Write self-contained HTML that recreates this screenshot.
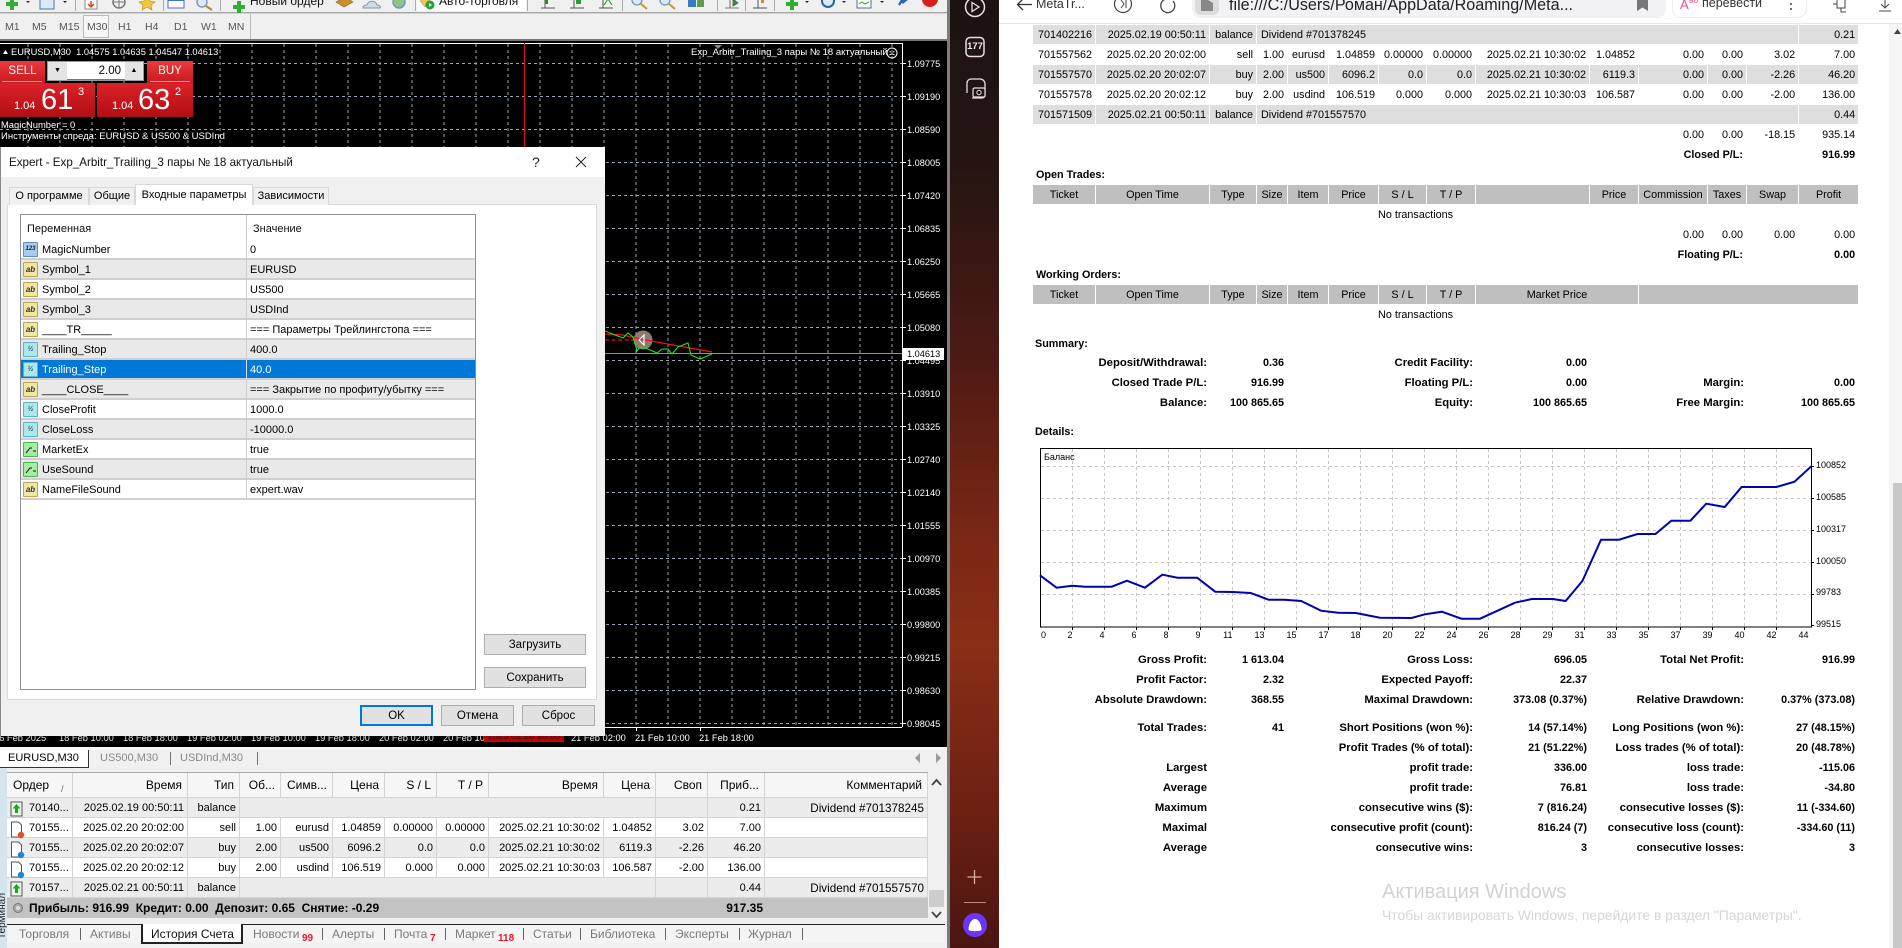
<!DOCTYPE html>
<html lang="ru"><head><meta charset="utf-8"><title>MetaTrader</title>
<style>
*{box-sizing:border-box}
html,body{margin:0;padding:0;width:1902px;height:948px;overflow:hidden;background:#fff;font-family:"Liberation Sans","Noto Sans CJK SC",sans-serif;color:#000}
.a{position:absolute;white-space:nowrap}
#wrap{position:relative;width:1902px;height:948px;overflow:hidden}
table{position:absolute;border-collapse:separate;border-spacing:0;table-layout:fixed;font-size:10.8px}
td{padding:0 3px 0 0;white-space:nowrap;overflow:hidden;text-align:right}
/* report */
.t td{height:20px;padding-top:2px;line-height:17px;border-right:1px solid #fff;border-bottom:1px solid #fff}
.t tr.g td{background:#dedede}
.t tr.h td{background:#bfbfbf;text-align:center;padding:2px 0 0}
.t b{font-weight:700}
.s td{height:20px;line-height:20px;font-weight:700}
.s td:nth-child(odd){font-size:11.3px}
/* chart labels */
.pl{position:absolute;left:907px;font-size:9.2px;color:#fff;line-height:10px}
.tl{position:absolute;top:732px;font-size:9.3px;color:#fff;line-height:12px;white-space:nowrap}
/* dialog table */
.dr{position:absolute;left:21px;width:454px;height:20px;border-bottom:2px solid #cfcfcf;font-size:11px;line-height:21px}
.dr.g{background:#e9e9e9}
.dr.sel{background:#0078d7;color:#fff;border-bottom-color:#cfcfcf}
.dr .n{position:absolute;left:21px;top:0}
.dr .v{position:absolute;left:229px;top:0}
.dr .d{position:absolute;left:225px;top:0;width:1px;height:20px;background:#cfcfcf}
.ic{position:absolute;left:2px;top:2px;width:15px;height:15px;border:1px solid #b9a456;background:#f3e6a2;border-radius:1px;font-size:8px;line-height:13px;text-align:center;color:#333;font-weight:700}
.ic.n1{background:#a9cbee;border-color:#5d8fc4;color:#123;font-size:6px}
.ic.f{background:#aee6ee;border-color:#5cb4c8;color:#256;font-size:7px}
.ic.b{background:#a6eca2;border-color:#4fb155}
.btn{position:absolute;background:#e1e1e1;border:1px solid #adadad;font-size:11.5px;text-align:center;line-height:21px}
.tab{position:absolute;top:187px;height:18px;background:#f0f0f0;border:1px solid #d9d9d9;border-bottom:0;font-size:11px;line-height:17px;text-align:center}
/* terminal table */
.b td{height:20px;padding-top:2px;line-height:17px;font-size:11px;border-right:1px solid #d4d4d4;border-bottom:1px solid #d4d4d4;background:#fff}
.b td.c{font-size:11.7px}
.b tr.g td{background:#ececec}
.b tr.hh td{height:25px;line-height:24px;font-size:12px;background:#f7f7f7;padding:0 5px 0 0;border-bottom:1px solid #d4d4d4}
.bt{position:absolute;top:934px;transform:translateY(-50%);font-size:12px;color:#7a7a7a}
.sp{position:absolute;top:928px;width:1px;height:12px;background:#666}
.red{color:#e8182c;font-weight:700;font-size:10px}
.pos{position:absolute;font-size:10px}
.m{position:absolute;top:21px;font-size:10.5px;color:#555;line-height:12px}
</style></head><body><div id="wrap">

<!-- terminal bg -->
<div class="a" style="left:0;top:0;width:950px;height:948px;background:#f0f0f0"></div>

<!-- row 1 toolbar -->
<svg class="a" style="left:0;top:0" width="950" height="14" viewBox="0 0 950 14">
<rect x="0" y="12" width="950" height="1.4" fill="#a6a6a6"/>
<path d="M12 -2v12M6 4h12" stroke="#2fae2f" stroke-width="4"/><path d="M26 1l4 0-2 2z" fill="#222"/>
<rect x="40" y="-3" width="14" height="12" fill="#dfeaf6" stroke="#4a76a8"/><path d="M63 1l4 0-2 2z" fill="#222"/>
<rect x="75" y="0" width="1" height="11" fill="#aaa"/>
<rect x="85" y="-3" width="12" height="12" fill="#fff" stroke="#8a8a8a"/><path d="M91 1v5M88 4l3 3 3-3" stroke="#d2421f" fill="none" stroke-width="1.5"/>
<circle cx="119" cy="2" r="6" fill="none" stroke="#777" stroke-width="1.5"/><path d="M119 -4v12M113 2h12" stroke="#777"/>
<path d="M147 -4l3 5 5 1-4 3 1 5-5-3-5 3 1-5-4-3 5-1z" fill="#f5c53a" stroke="#b88b10" stroke-width=".6"/>
<rect x="163" y="0" width="1" height="11" fill="#aaa"/>
<rect x="168" y="-2" width="16" height="10" fill="#fff" stroke="#3c74b4"/><rect x="168" y="-2" width="16" height="3" fill="#3c74b4"/>
<circle cx="202" cy="2" r="5" fill="#dbe8f5" stroke="#7a96b6" stroke-width="1.4"/><path d="M206 6l6 4" stroke="#b98a2a" stroke-width="2.2"/>
<rect x="220" y="0" width="1" height="11" fill="#aaa"/>
<path d="M239 1v12M233 7h12" stroke="#2fae2f" stroke-width="4"/>
<path d="M336 2l9-5 8 5-9 5z" fill="#c8912e" stroke="#8a601a" stroke-width=".6"/>
<path d="M363 8c0-3 3-3 4-3 1-5 9-5 10 0 3 0 4 2 3 3z" fill="#cfdbe6" stroke="#8898a8"/>
<circle cx="399" cy="2" r="6" fill="#8fc38a" stroke="#5f9cc4" stroke-width="1.4"/>
<rect x="415" y="0" width="1" height="11" fill="#aaa"/>
<rect x="417" y="-2" width="109" height="13" fill="#fff"/>
<path d="M420 1l6-5 5 6-6 5z" fill="#e7c75a" stroke="#a98a2a" stroke-width=".5"/><circle cx="430" cy="5" r="4.5" fill="#2a9d3f"/><path d="M429 3l3 2-3 2z" fill="#fff"/>
<g fill="none" stroke="#555"><path d="M545 -2v10M541 8h14"/><path d="M574 -2v10M570 8h14"/><path d="M603 -2v10M599 8h14"/></g>
<rect x="545" y="-2" width="3" height="6" fill="#2a8c2a"/><rect x="576" y="-1" width="5" height="5" fill="#2a9d2a"/><path d="M604 5l4-6 4 6" stroke="#2a8c2a" fill="none"/>
<rect x="527" y="0" width="1" height="11" fill="#aaa"/><rect x="622" y="0" width="1" height="11" fill="#aaa"/>
<circle cx="637" cy="0" r="5" fill="#dbe8f5" stroke="#6f94bc" stroke-width="1.3"/><path d="M641 4l6 5" stroke="#c69a32" stroke-width="2"/>
<circle cx="665" cy="0" r="5" fill="#dbe8f5" stroke="#6f94bc" stroke-width="1.3"/><path d="M669 4l6 5" stroke="#c69a32" stroke-width="2"/>
<rect x="688" y="0" width="8" height="7" fill="#3a7cc4"/><rect x="697" y="0" width="7" height="7" fill="#5aa24a"/>
<rect x="717" y="0" width="1" height="11" fill="#aaa"/>
<path d="M730 -2v10M725 8h14M733 -1l5 4-5 3z" fill="#2a9d2a" stroke="#555" stroke-width=".8"/>
<rect x="745" y="0" width="1" height="11" fill="#aaa"/>
<path d="M758 -2v10M753 8h14" stroke="#555" fill="none"/><rect x="761" y="0" width="3" height="3" fill="#c84"/>
<rect x="774" y="0" width="1" height="11" fill="#aaa"/>
<path d="M792 -2v12M786 4h12" stroke="#2fae2f" stroke-width="4"/><path d="M805 1l4 0-2 2z" fill="#222"/>
<circle cx="828" cy="1" r="6" fill="#dfeaf6" stroke="#2566aa" stroke-width="2"/><path d="M842 1l4 0-2 2z" fill="#222"/>
<rect x="857" y="-2" width="14" height="10" fill="#fff" stroke="#55708c"/><path d="M859 4l3-2 3 2 4-2" stroke="#3a9a3a" fill="none"/><path d="M880 1l4 0-2 2z" fill="#222"/>
<path d="M904 -3l-5 8M903 -3l3 3-4 3" stroke="#3066b4" stroke-width="2.4" fill="none"/>
<path d="M922 2c0-4 6-4 8-3v9l-3-1-3 2z" fill="#ddd"/><circle cx="930" cy="-1" r="8" fill="#d91e1e"/>
</svg>
<div class="a" style="left:250px;top:-6px;font-size:12px;line-height:14px;color:#111">Новый ордер</div>
<div class="a" style="left:439px;top:-6px;font-size:12px;line-height:14px;color:#111">Авто-торговля</div>

<!-- row 2 timeframes -->
<div class="a" style="left:83px;top:15px;width:26px;height:23px;border:1px solid #bbb;background:#f7f7f7"></div>
<div class="m" style="left:5px">M1</div><div class="m" style="left:32px">M5</div><div class="m" style="left:59px">M15</div>
<div class="m" style="left:87px">M30</div><div class="m" style="left:118px">H1</div><div class="m" style="left:145px">H4</div>
<div class="m" style="left:174px">D1</div><div class="m" style="left:201px">W1</div><div class="m" style="left:228px">MN</div>
<div class="a" style="left:250px;top:14px;width:1px;height:25px;background:#bbb"></div>

<!-- chart -->
<div class="a" style="left:0;top:39px;width:948px;height:2px;background:#777"></div>
<div class="a" style="left:0;top:41px;width:947px;height:706px;background:#000"></div>
<svg class="a" style="left:0;top:41px" width="947" height="706" viewBox="0 41 947 706">
<path d="M0 43.5H902M902.5 43V727M0 727.5H902" stroke="#fff" fill="none"/>
<path d="M28 44V727M60 44V727M92 44V727M124 44V727M156 44V727M188 44V727M220 44V727M252 44V727M284 44V727M316 44V727M348 44V727M380 44V727M412 44V727M444 44V727M476 44V727M508 44V727M540 44V727M572 44V727M604 44V727M636 44V727M668 44V727M700 44V727M732 44V727M764 44V727M796 44V727M828 44V727M860 44V727M892 44V727" stroke="#9aa6b2" stroke-dasharray="3 3" fill="none"/>
<path d="M0 63.5H902M0 96.5H902M0 129.5H902M0 162.5H902M0 195.5H902M0 228.5H902M0 261.5H902M0 294.5H902M0 327.5H902M0 360.5H902M0 393.5H902M0 426.5H902M0 459.5H902M0 492.5H902M0 525.5H902M0 558.5H902M0 591.5H902M0 624.5H902M0 657.5H902M0 690.5H902M0 723.5H902" stroke="#9aa6b2" stroke-dasharray="3 3" fill="none"/>
<path d="M902 63.5h4M902 96.5h4M902 129.5h4M902 162.5h4M902 195.5h4M902 228.5h4M902 261.5h4M902 294.5h4M902 327.5h4M902 360.5h4M902 393.5h4M902 426.5h4M902 459.5h4M902 492.5h4M902 525.5h4M902 558.5h4M902 591.5h4M902 624.5h4M902 657.5h4M902 690.5h4M902 723.5h4M636.5 727v4M700.5 727v4" stroke="#fff"/>
<path d="M524.5 43V727" stroke="#e01010"/>
<path d="M604 353.5H902" stroke="#8a929a"/>
<path d="M714 45l4 4 4-4z" fill="#7a8a9a"/>
<path d="M3 54l2.5-4 2.5 4z" fill="#fff"/>
<circle cx="643" cy="340" r="9.5" fill="#8b7b6e"/>
<path d="M605 340H640" stroke="#f01010" stroke-width="1.3" stroke-dasharray="4 2.5"/>
<path d="M605 334L623 335L640 339L712 352" stroke="#f01010" stroke-width="1.3" fill="none"/>
<path d="M605 331L615 335L623 338L628 333L633 337L635 343L637 351L640 347L648 349L657 353L662 349L668 349L672 354L678 347L688 343L691 355L700 359L705 357L712 354" stroke="#1ee61e" stroke-width="1.1" fill="none"/>
<path d="M644 335L639 340L644 345Z" fill="none" stroke="#fff" stroke-width="1.2"/>
</svg>
<div class="a" style="left:11px;top:46px;font-size:9.3px;line-height:12px;color:#fff">EURUSD,M30&nbsp; 1.04575 1.04635 1.04547 1.04613</div>
<div class="a" style="left:691px;top:47px;font-size:9.5px;line-height:12px;color:#fff">Exp_Arbitr_Trailing_3 пары № 18 актуальный</div>
<svg class="a" style="left:886px;top:47px" width="12" height="12"><circle cx="6" cy="6" r="5" fill="none" stroke="#fff"/><circle cx="4.2" cy="4.8" r=".7" fill="#fff"/><circle cx="7.8" cy="4.8" r=".7" fill="#fff"/><path d="M3.5 8q2.5-2 5 0" stroke="#fff" fill="none"/></svg>
<div class="pl" style="top:59px">1.09775</div><div class="pl" style="top:92px">1.09190</div><div class="pl" style="top:125px">1.08590</div><div class="pl" style="top:158px">1.08005</div><div class="pl" style="top:191px">1.07420</div><div class="pl" style="top:224px">1.06835</div><div class="pl" style="top:257px">1.06250</div><div class="pl" style="top:290px">1.05665</div><div class="pl" style="top:323px">1.05080</div><div class="pl" style="top:356px">1.04495</div><div class="pl" style="top:389px">1.03910</div><div class="pl" style="top:422px">1.03325</div><div class="pl" style="top:455px">1.02740</div><div class="pl" style="top:488px">1.02140</div><div class="pl" style="top:521px">1.01555</div><div class="pl" style="top:554px">1.00970</div><div class="pl" style="top:587px">1.00385</div><div class="pl" style="top:620px">0.99800</div><div class="pl" style="top:653px">0.99215</div><div class="pl" style="top:686px">0.98630</div><div class="pl" style="top:719px">0.98045</div>
<div class="a" style="left:903px;top:348px;width:41px;height:12px;background:#fff;color:#000;font-size:9.2px;line-height:12px;padding-left:4px">1.04613</div>
<div class="tl" style="left:-6px">16 Feb 2025</div><div class="tl" style="left:59px">18 Feb 10:00</div><div class="tl" style="left:123px">18 Feb 18:00</div><div class="tl" style="left:187px">19 Feb 02:00</div><div class="tl" style="left:251px">19 Feb 10:00</div><div class="tl" style="left:315px">19 Feb 18:00</div><div class="tl" style="left:379px">20 Feb 02:00</div><div class="tl" style="left:443px">20 Feb 10:00</div>
<div class="a" style="left:484px;top:730px;width:80px;height:12px;background:#d40000;color:#222;font-size:9.3px;line-height:12px;text-align:center">2025.02.20 20:00</div>
<div class="tl" style="left:571px">21 Feb 02:00</div><div class="tl" style="left:635px">21 Feb 10:00</div><div class="tl" style="left:699px">21 Feb 18:00</div>

<!-- one click panel -->
<div class="a" style="left:0;top:61px;width:45px;height:22px;background:linear-gradient(#ec3a3e,#c8191e);color:#fff;font-size:11.5px;line-height:20px;text-align:center">SELL</div>
<div class="a" style="left:147px;top:61px;width:46px;height:22px;background:linear-gradient(#ec3a3e,#c8191e);color:#fff;font-size:11.5px;line-height:20px;text-align:center">BUY</div>
<div class="a" style="left:2px;top:81px;width:40px;height:1px;background:#f2a0a0"></div>
<div class="a" style="left:150px;top:81px;width:40px;height:1px;background:#f2a0a0"></div>
<div class="a" style="left:47px;top:61px;width:97px;height:20px;background:#fff;border:1px solid #999;box-shadow:inset 0 -1px 0 #777"></div>
<div class="a" style="left:48px;top:62px;width:19px;height:18px;background:#e4e4e4;font-size:7px;line-height:18px;text-align:center">▼</div>
<div class="a" style="left:125px;top:62px;width:18px;height:18px;background:#e4e4e4;font-size:7px;line-height:18px;text-align:center">▲</div>
<div class="a" style="left:95px;top:62px;width:26px;font-size:11.5px;line-height:18px;text-align:right">2.00</div>
<div class="a" style="left:0;top:83px;width:95px;height:34px;background:linear-gradient(#dc2228,#b00f14)"></div>
<div class="a" style="left:97px;top:83px;width:96px;height:34px;background:linear-gradient(#dc2228,#b00f14)"></div>
<div class="a" style="left:14px;top:100px;font-size:11px;line-height:13px;color:#fff">1.04</div>
<div class="a" style="left:41px;top:83px;font-size:29px;line-height:34px;color:#fff">61</div>
<div class="a" style="left:78px;top:86px;font-size:11px;line-height:13px;color:#fff">3</div>
<div class="a" style="left:112px;top:100px;font-size:11px;line-height:13px;color:#fff">1.04</div>
<div class="a" style="left:138px;top:83px;font-size:29px;line-height:34px;color:#fff">63</div>
<div class="a" style="left:175px;top:86px;font-size:11px;line-height:13px;color:#fff">2</div>
<div class="a" style="left:1px;top:119px;font-size:9.4px;line-height:12px;color:#fff">MagicNumber = 0</div>
<div class="a" style="left:1px;top:131px;font-size:9.5px;line-height:12px;color:#fff">Инструменты спреда: EURUSD &amp; US500 &amp; USDInd</div>

<!-- dialog -->
<div class="a" style="left:0;top:147px;width:605px;height:589px;background:#f0f0f0;box-shadow:2px 2px 6px rgba(0,0,0,.25);border-left:1px solid #888">
</div>
<div class="a" style="left:1px;top:147px;width:604px;height:30px;background:#fff"></div>
<div class="a" style="left:9px;top:155px;font-size:11.6px;line-height:15px;color:#111">Expert - Exp_Arbitr_Trailing_3 пары № 18 актуальный</div>
<div class="a" style="left:532px;top:154px;font-size:14px;line-height:16px;color:#222">?</div>
<svg class="a" style="left:575px;top:156px" width="12" height="12"><path d="M1 1l10 10M11 1L1 11" stroke="#222" fill="none"/></svg>
<div class="a" style="left:7px;top:204px;width:590px;height:496px;background:#fff;border:1px solid #dadada"></div>
<div class="tab" style="left:9px;width:80px">О программе</div>
<div class="tab" style="left:89px;width:46px">Общие</div>
<div class="tab" style="left:135px;width:118px;top:184px;height:21px;background:#fff;line-height:20px;z-index:2">Входные параметры</div>
<div class="tab" style="left:253px;width:76px">Зависимости</div>
<div class="a" style="left:20px;top:214px;width:456px;height:476px;border:1px solid #8a8f96;background:#fff"></div>
<div class="a" style="left:27px;top:222px;font-size:11px;line-height:14px;color:#111">Переменная</div>
<div class="a" style="left:253px;top:222px;font-size:11px;line-height:14px;color:#111">Значение</div>
<div class="a" style="left:246px;top:215px;width:1px;height:25px;background:#ccc"></div>
<div class="dr" style="top:240px"><i class="ic n1">123</i><span class="n">MagicNumber</span><i class="d"></i><span class="v">0</span></div>
<div class="dr g" style="top:260px"><i class="ic">ab</i><span class="n">Symbol_1</span><i class="d"></i><span class="v">EURUSD</span></div>
<div class="dr" style="top:280px"><i class="ic">ab</i><span class="n">Symbol_2</span><i class="d"></i><span class="v">US500</span></div>
<div class="dr g" style="top:300px"><i class="ic">ab</i><span class="n">Symbol_3</span><i class="d"></i><span class="v">USDInd</span></div>
<div class="dr" style="top:320px"><i class="ic">ab</i><span class="n">____TR_____</span><i class="d"></i><span class="v">=== Параметры Трейлингстопа ===</span></div>
<div class="dr g" style="top:340px"><i class="ic f">½</i><span class="n">Trailing_Stop</span><i class="d"></i><span class="v">400.0</span></div>
<div class="dr sel" style="top:360px"><i class="ic f">½</i><span class="n">Trailing_Step</span><i class="d" style="background:#cfe3f5"></i><span class="v">40.0</span></div>
<div class="dr g" style="top:380px"><i class="ic">ab</i><span class="n">____CLOSE____</span><i class="d"></i><span class="v">=== Закрытие по профиту/убытку ===</span></div>
<div class="dr" style="top:400px"><i class="ic f">½</i><span class="n">CloseProfit</span><i class="d"></i><span class="v">1000.0</span></div>
<div class="dr g" style="top:420px"><i class="ic f">½</i><span class="n">CloseLoss</span><i class="d"></i><span class="v">-10000.0</span></div>
<div class="dr" style="top:440px"><i class="ic b"><svg width="13" height="13" style="display:block"><path d="M2 10L6 5H8M9 8h3" stroke="#111" fill="none"/></svg></i><span class="n">MarketEx</span><i class="d"></i><span class="v">true</span></div>
<div class="dr g" style="top:460px"><i class="ic b"><svg width="13" height="13" style="display:block"><path d="M2 10L6 5H8M9 8h3" stroke="#111" fill="none"/></svg></i><span class="n">UseSound</span><i class="d"></i><span class="v">true</span></div>
<div class="dr" style="top:480px"><i class="ic">ab</i><span class="n">NameFileSound</span><i class="d"></i><span class="v">expert.wav</span></div>
<div class="btn" style="left:484px;top:634px;width:102px;height:21px">Загрузить</div>
<div class="btn" style="left:484px;top:667px;width:102px;height:21px">Сохранить</div>
<div class="btn" style="left:360px;top:705px;width:73px;height:21px;border:2px solid #0078d7;line-height:19px">OK</div>
<div class="btn" style="left:441px;top:705px;width:73px;height:21px">Отмена</div>
<div class="btn" style="left:522px;top:705px;width:73px;height:21px">Сброс</div>

<!-- terminal -->
<div class="a" style="left:0;top:747px;width:948px;height:3px;background:#f8f8f8"></div>
<div class="a" style="left:0;top:750px;width:89px;height:18px;background:#fff;border-right:1px solid #333;border-bottom:1px solid #333;font-size:11px;line-height:17px;padding-left:8px">EURUSD,M30</div>
<div class="a" style="left:100px;top:752px;font-size:11px;line-height:13px;color:#888">US500,M30</div>
<div class="a" style="left:170px;top:752px;width:1px;height:13px;background:#777"></div>
<div class="a" style="left:180px;top:752px;font-size:11px;line-height:13px;color:#888">USDInd,M30</div>
<div class="a" style="left:257px;top:752px;width:1px;height:13px;background:#777"></div>
<svg class="a" style="left:914px;top:753px" width="28" height="10"><path d="M6 0v10L1 5zM22 0v10l5-5z" fill="#9a9a9a"/></svg>
<div class="a" style="left:0;top:768px;width:7px;height:180px;background:#d6e4f0"></div>
<div class="a" style="left:7px;top:772px;width:921px;height:1px;background:#a8a8a8"></div>

<table class="b" style="left:7px;top:773px;width:921px">
<colgroup><col style="width:66px"><col style="width:115px"><col style="width:52px"><col style="width:41px"><col style="width:52px"><col style="width:52px"><col style="width:52px"><col style="width:52px"><col style="width:115px"><col style="width:52px"><col style="width:52px"><col style="width:57px"><col style="width:163px"></colgroup>
<tr class="hh"><td style="text-align:left;padding-left:6px">Ордер</td><td>Время</td><td>Тип</td><td>Об...</td><td>Симв...</td><td>Цена</td><td>S / L</td><td>T / P</td><td>Время</td><td>Цена</td><td>Своп</td><td>Приб...</td><td>Комментарий</td></tr>
<tr class="g"><td style="text-align:left;padding-left:22px">70140...</td><td>2025.02.19 00:50:11</td><td>balance</td><td colspan="7"></td><td></td><td>0.21</td><td class="c">Dividend #701378245</td></tr>
<tr><td style="text-align:left;padding-left:22px">70155...</td><td>2025.02.20 20:02:00</td><td>sell</td><td>1.00</td><td>eurusd</td><td>1.04859</td><td>0.00000</td><td>0.00000</td><td>2025.02.21 10:30:02</td><td>1.04852</td><td>3.02</td><td>7.00</td><td></td></tr>
<tr class="g"><td style="text-align:left;padding-left:22px">70155...</td><td>2025.02.20 20:02:07</td><td>buy</td><td>2.00</td><td>us500</td><td>6096.2</td><td>0.0</td><td>0.0</td><td>2025.02.21 10:30:02</td><td>6119.3</td><td>-2.26</td><td>46.20</td><td></td></tr>
<tr><td style="text-align:left;padding-left:22px">70155...</td><td>2025.02.20 20:02:12</td><td>buy</td><td>2.00</td><td>usdind</td><td>106.519</td><td>0.000</td><td>0.000</td><td>2025.02.21 10:30:03</td><td>106.587</td><td>-2.00</td><td>136.00</td><td></td></tr>
<tr class="g"><td style="text-align:left;padding-left:22px">70157...</td><td>2025.02.21 00:50:11</td><td>balance</td><td colspan="7"></td><td></td><td>0.44</td><td class="c">Dividend #701557570</td></tr>
</table>
<div class="a" style="left:7px;top:898px;width:921px;height:20px;background:#c3c3c3"></div>
<div class="a" style="left:29px;top:898px;font-size:12px;line-height:20px;font-weight:700">Прибыль: 916.99&nbsp; Кредит: 0.00&nbsp; Депозит: 0.65&nbsp; Снятие: -0.29</div>
<div class="a" style="left:700px;width:63px;top:898px;font-size:12px;line-height:20px;font-weight:700;text-align:right">917.35</div>
<svg class="a" style="left:12px;top:902px" width="12" height="12"><circle cx="6" cy="6" r="4.5" fill="#aaa" stroke="#777"/><circle cx="6" cy="6" r="2" fill="#ddd"/></svg>
<!-- order icons -->
<svg class="a" style="left:9px;top:800px" width="16" height="98" viewBox="0 0 16 98">
<g><rect x="2" y="2" width="11" height="14" fill="#eaf5ea" stroke="#555"/><path d="M7.5 4l4 4.500H9v4.500H6v-4.500H3.500z" fill="#1fa32a"/></g>
<g><path d="M2.500 22h7l3 3v12h-10z" fill="#fff" stroke="#555"/><circle cx="12" cy="35" r="3.200" fill="#e2501c"/></g>
<g><path d="M2.500 42h7l3 3v12h-10z" fill="#fff" stroke="#555"/><circle cx="12" cy="55" r="3.200" fill="#1c86d8"/></g>
<g><path d="M2.500 62h7l3 3v12h-10z" fill="#fff" stroke="#555"/><circle cx="12" cy="75" r="3.200" fill="#1c86d8"/></g>
<g><rect x="2" y="82" width="11" height="14" fill="#eaf5ea" stroke="#555"/><path d="M7.500 84l4 4.500H9v4.500H6v-4.500H3.500z" fill="#1fa32a"/></g>
</svg>
<div class="a" style="left:61px;top:784px;font-size:9px;line-height:10px;color:#666">/</div>
<!-- scrollbar -->
<div class="a" style="left:928px;top:773px;width:17px;height:151px;background:#f0f0f0"></div>
<svg class="a" style="left:928px;top:775px" width="17" height="148"><path d="M4 10l4.500-5 4.500 5M4 137l4.500 5 4.500-5" stroke="#444" stroke-width="1.800" fill="none"/></svg>
<div class="a" style="left:929px;top:890px;width:15px;height:17px;background:#cdcdcd"></div>
<!-- bottom tabs -->
<div class="a" style="left:7px;top:924px;width:938px;height:1px;background:#222"></div>
<div class="a" style="left:7px;top:925px;width:938px;height:18px;background:#f4f4f4"></div>
<div class="a" style="left:141px;top:924px;width:102px;height:20px;background:#fff;border-top:0;border-left:2px solid #222;border-right:2px solid #222;border-bottom:2px solid #222"></div>
<div class="bt" style="left:19px">Торговля</div><div class="sp" style="left:80px"></div>
<div class="bt" style="left:90px">Активы</div>
<div class="bt" style="left:151px;color:#111">История Счета</div>
<div class="bt" style="left:253px">Новости</div><div class="pos red" style="left:302px;top:933px;line-height:11px">99</div><div class="sp" style="left:322px"></div>
<div class="bt" style="left:332px">Алерты</div><div class="sp" style="left:384px"></div>
<div class="bt" style="left:394px">Почта</div><div class="pos red" style="left:430px;top:933px;line-height:11px">7</div><div class="sp" style="left:445px"></div>
<div class="bt" style="left:455px">Маркет</div><div class="pos red" style="left:498px;top:933px;line-height:11px">118</div><div class="sp" style="left:523px"></div>
<div class="bt" style="left:533px">Статьи</div><div class="sp" style="left:580px"></div>
<div class="bt" style="left:590px">Библиотека</div><div class="sp" style="left:665px"></div>
<div class="bt" style="left:675px">Эксперты</div><div class="sp" style="left:739px"></div>
<div class="bt" style="left:748px">Журнал</div><div class="sp" style="left:802px"></div>
<div class="a" style="left:-18px;top:914px;width:42px;height:8px;font-size:10px;line-height:8px;transform:rotate(-90deg);color:#222">Терминал</div>
<div class="a" style="left:947px;top:0;width:3px;height:948px;background:#7c7c7c"></div>

<!-- browser sidebar -->
<div class="a" style="left:950px;top:0;width:49px;height:948px;background:linear-gradient(#1b1311 0,#251512 18%,#4e1a14 38%,#7d2815 58%,#8a2e16 68%,#6e2013 85%,#4a1511 100%)"></div>
<svg class="a" style="left:950px;top:0" width="49" height="948">
<circle cx="25" cy="7" r="9.500" fill="none" stroke="#e8e0dc" stroke-width="1.500"/><path d="M22 2.500l7 4.500-7 4.500z" fill="none" stroke="#e8e0dc" stroke-width="1.300"/>
<rect x="16" y="37.500" width="18" height="19" rx="4" fill="none" stroke="#e8e0dc" stroke-width="1.500"/>
<path d="M30 79h-9a4 4 0 0 0-4 4v10M22 98h10a3 3 0 0 0 3-3V84a5 5 0 0 0-5-5" fill="none" stroke="#e8e0dc" stroke-width="1.300"/>
<rect x="23" y="88" width="12" height="9" rx="1.500" fill="#201412" stroke="#e8e0dc" stroke-width="1.200"/><circle cx="29" cy="92.500" r="2.200" fill="none" stroke="#e8e0dc"/>
<path d="M24.500 870v14M17.500 877h14" stroke="#d8b0a0" stroke-width="1.300"/>
<path d="M14 902.500h22" stroke="#c28a78"/>
<circle cx="25" cy="925" r="12" fill="#6a35ff"/><path d="M18.500 930c0-6 3-11 6.500-11s6.500 5 6.500 11c-2 1.500-11 1.500-13 0z" fill="#fff"/>
</svg>
<div class="a" style="left:966px;top:41px;width:18px;text-align:center;font-size:9.500px;font-weight:700;line-height:12px;color:#eee">177</div>

<!-- browser top -->
<div class="a" style="left:999px;top:0;width:903px;height:24px;background:#fff;border-bottom:1px solid #e6e6e6"></div>
<svg class="a" style="left:1015px;top:0" width="20" height="14"><path d="M17 4.500H3M8 -1L2.500 4.500 8 10" stroke="#333" stroke-width="1.300" fill="none"/></svg>
<div class="a" style="left:1036px;top:-3px;font-size:12.500px;line-height:15px;color:#333">MetaTr...</div>
<svg class="a" style="left:1111px;top:0" width="24" height="14"><circle cx="12" cy="4" r="8.500" fill="none" stroke="#444" stroke-width="1.200"/><path d="M10 0l3 4-3 4M15 0v8" stroke="#444" fill="none"/></svg>
<svg class="a" style="left:1156px;top:0" width="22" height="14"><path d="M17 1a7 7 0 1 1-3-2" stroke="#444" stroke-width="1.300" fill="none"/></svg>
<div class="a" style="left:1192px;top:-6px;width:474px;height:24px;background:#f2f2f4;border-radius:9px"></div>
<div class="a" style="left:1195px;top:-6px;width:24px;height:21px;background:#dcdcdf;border-radius:6px"></div>
<svg class="a" style="left:1201px;top:0" width="12" height="12"><path d="M0 0h7l5 3v8H0z" fill="#888"/></svg>
<div class="a" style="left:1229px;top:-5px;font-size:16.150px;line-height:20px;color:#222">file:///C:/Users/Роман/AppData/Roaming/Meta...</div>
<svg class="a" style="left:1637px;top:0" width="12" height="12"><path d="M0 0h11v11l-5.500-3.500L0 11z" fill="#777"/></svg>
<div class="a" style="left:1672px;top:-6px;width:135px;height:24px;border:1px solid #ececec;border-radius:9px;background:#fff"></div>
<div class="a" style="left:1680px;top:-2px;font-size:13px;line-height:14px;color:#e8508c">A</div>
<div class="a" style="left:1689px;top:-4px;font-size:8px;line-height:10px;color:#e8508c">аб</div>
<div class="a" style="left:1702px;top:-4px;font-size:12.500px;line-height:15px;color:#333">перевести</div>
<svg class="a" style="left:1788px;top:0" width="6" height="14"><circle cx="3" cy="4" r="1" fill="#444"/><circle cx="3" cy="9" r="1" fill="#444"/></svg>
<svg class="a" style="left:1832px;top:0" width="18" height="14"><path d="M5 -1v9h8V-1M1 4h4M9 8v4h5" stroke="#444" fill="none"/></svg>
<svg class="a" style="left:1878px;top:0" width="14" height="14"><path d="M7 -1v8M3 4l4 4 4-4M1 11h12" stroke="#444" fill="none"/></svg>

<!-- report tables -->
<table class="t" style="left:1033px;top:25px;width:826px">
<colgroup><col style="width:63px"><col style="width:114px"><col style="width:47px"><col style="width:31px"><col style="width:41px"><col style="width:50px"><col style="width:48px"><col style="width:49px"><col style="width:114px"><col style="width:49px"><col style="width:69px"><col style="width:39px"><col style="width:52px"><col style="width:60px"></colgroup>
<tr class="g"><td>701402216</td><td>2025.02.19 00:50:11</td><td>balance</td><td colspan="10" style="text-align:left;padding-left:4px">Dividend #701378245</td><td>0.21</td></tr>
<tr><td>701557562</td><td>2025.02.20 20:02:00</td><td>sell</td><td>1.00</td><td>eurusd</td><td>1.04859</td><td>0.00000</td><td>0.00000</td><td>2025.02.21 10:30:02</td><td>1.04852</td><td>0.00</td><td>0.00</td><td>3.02</td><td>7.00</td></tr>
<tr class="g"><td>701557570</td><td>2025.02.20 20:02:07</td><td>buy</td><td>2.00</td><td>us500</td><td>6096.2</td><td>0.0</td><td>0.0</td><td>2025.02.21 10:30:02</td><td>6119.3</td><td>0.00</td><td>0.00</td><td>-2.26</td><td>46.20</td></tr>
<tr><td>701557578</td><td>2025.02.20 20:02:12</td><td>buy</td><td>2.00</td><td>usdind</td><td>106.519</td><td>0.000</td><td>0.000</td><td>2025.02.21 10:30:03</td><td>106.587</td><td>0.00</td><td>0.00</td><td>-2.00</td><td>136.00</td></tr>
<tr class="g"><td>701571509</td><td>2025.02.21 00:50:11</td><td>balance</td><td colspan="10" style="text-align:left;padding-left:4px">Dividend #701557570</td><td>0.44</td></tr>
<tr><td colspan="10"></td><td>0.00</td><td>0.00</td><td>-18.15</td><td>935.14</td></tr>
<tr><td colspan="12"><b>Closed P/L:</b></td><td></td><td><b>916.99</b></td></tr>
<tr><td colspan="14" style="text-align:left;padding-left:3px"><b>Open Trades:</b></td></tr>
<tr class="h"><td>Ticket</td><td>Open Time</td><td>Type</td><td>Size</td><td>Item</td><td>Price</td><td>S / L</td><td>T / P</td><td></td><td>Price</td><td>Commission</td><td>Taxes</td><td>Swap</td><td>Profit</td></tr>
<tr><td colspan="14" style="text-align:center;padding-right:60px">No transactions</td></tr>
<tr><td colspan="10"></td><td>0.00</td><td>0.00</td><td>0.00</td><td>0.00</td></tr>
<tr><td colspan="12"><b>Floating P/L:</b></td><td></td><td><b>0.00</b></td></tr>
<tr><td colspan="14" style="text-align:left;padding-left:3px"><b>Working Orders:</b></td></tr>
<tr class="h"><td>Ticket</td><td>Open Time</td><td>Type</td><td>Size</td><td>Item</td><td>Price</td><td>S / L</td><td>T / P</td><td colspan="2">Market Price</td><td colspan="4"></td></tr>
<tr><td colspan="14" style="text-align:center;padding-right:60px">No transactions</td></tr>
</table>

<div class="a" style="left:1035px;top:338px;font-size:10.800px;font-weight:700;line-height:13px">Summary:</div>
<table class="s" style="left:1033px;top:353px;width:825px">
<colgroup><col style="width:177px"><col style="width:77px"><col style="width:189px"><col style="width:114px"><col style="width:157px"><col style="width:111px"></colgroup>
<tr><td>Deposit/Withdrawal:</td><td>0.36</td><td>Credit Facility:</td><td>0.00</td><td></td><td></td></tr>
<tr><td>Closed Trade P/L:</td><td>916.99</td><td>Floating P/L:</td><td>0.00</td><td>Margin:</td><td>0.00</td></tr>
<tr><td>Balance:</td><td>100 865.65</td><td>Equity:</td><td>100 865.65</td><td>Free Margin:</td><td>100 865.65</td></tr>
</table>
<div class="a" style="left:1035px;top:426px;font-size:10.800px;font-weight:700;line-height:13px">Details:</div>

<!-- balance chart -->
<svg class="a" style="left:1035px;top:445px" width="815" height="197" viewBox="1035 445 815 197">
<path d="M1072.500 449V626M1104.500 449V626M1136.500 449V626M1168.500 449V626M1200.500 449V626M1232.500 449V626M1264.500 449V626M1296.500 449V626M1328.500 449V626M1360.500 449V626M1392.500 449V626M1424.500 449V626M1456.500 449V626M1488.500 449V626M1520.500 449V626M1552.500 449V626M1584.500 449V626M1616.500 449V626M1648.500 449V626M1680.500 449V626M1712.500 449V626M1744.500 449V626M1776.500 449V626M1041 466.500H1811M1041 498.500H1811M1041 530.500H1811M1041 562.500H1811M1041 594.500H1811" stroke="#c6c6c6" stroke-dasharray="3 3" fill="none"/>
<rect x="1040.500" y="448.500" width="771" height="178.500" fill="none" stroke="#000"/>
<path d="M1072.500 627v3M1104.500 627v3M1136.500 627v3M1168.500 627v3M1200.500 627v3M1232.500 627v3M1264.500 627v3M1296.500 627v3M1328.500 627v3M1360.500 627v3M1392.500 627v3M1424.500 627v3M1456.500 627v3M1488.500 627v3M1520.500 627v3M1552.500 627v3M1584.500 627v3M1616.500 627v3M1648.500 627v3M1680.500 627v3M1712.500 627v3M1744.500 627v3M1776.500 627v3M1811 466.500h3M1811 498.500h3M1811 530.500h3M1811 562.500h3M1811 594.500h3M1811 625.500h3" stroke="#000"/>
<polyline points="1040,575.300 1056.600,587.700 1072.300,585.700 1084.700,586.700 1111.700,586.700 1126.900,580.700 1144.900,587.700 1162.300,574.700 1177.500,577.700 1197.200,577.700 1215.200,591.700 1232.600,592 1250.600,593 1268.600,599.700 1284.300,599.700 1301.200,601 1320.900,610.700 1338.300,612.700 1355.800,613 1380,617.700 1411.400,618 1425,614.300 1441.800,611.700 1461.500,618.700 1480,618.700 1515,602.700 1531.800,599 1553,599 1565.600,601 1582.400,581 1601,539.700 1619,539.700 1637.500,534 1655.500,534 1671.300,520.700 1690.400,520.700 1706.200,503.700 1724.700,507 1741.600,487 1776.500,487 1794.500,481.700 1811.300,466.300" fill="none" stroke="#0000b4" stroke-width="2"/>
<g font-family="Liberation Sans, sans-serif" font-size="9" fill="#000">
<text x="1044" y="460">Баланс</text>
<text x="1816" y="468">100852</text><text x="1816" y="500">100585</text><text x="1816" y="532">100317</text><text x="1816" y="564">100050</text><text x="1816" y="595">99783</text><text x="1816" y="627">99515</text>
<g text-anchor="end"><text x="1046" y="638">0</text><text x="1072.500" y="638">2</text><text x="1104.500" y="638">4</text><text x="1136.500" y="638">6</text><text x="1168.500" y="638">8</text><text x="1200.500" y="638">9</text><text x="1232.500" y="638">11</text><text x="1264.500" y="638">13</text><text x="1296.500" y="638">15</text><text x="1328.500" y="638">17</text><text x="1360.500" y="638">18</text><text x="1392.500" y="638">20</text><text x="1424.500" y="638">22</text><text x="1456.500" y="638">24</text><text x="1488.500" y="638">26</text><text x="1520.500" y="638">28</text><text x="1552.500" y="638">29</text><text x="1584.500" y="638">31</text><text x="1616.500" y="638">33</text><text x="1648.500" y="638">35</text><text x="1680.500" y="638">37</text><text x="1712.500" y="638">39</text><text x="1744.500" y="638">40</text><text x="1776.500" y="638">42</text><text x="1808.500" y="638">44</text></g>
</g></svg>

<table class="s" style="left:1033px;top:650px;width:825px">
<colgroup><col style="width:177px"><col style="width:77px"><col style="width:189px"><col style="width:114px"><col style="width:157px"><col style="width:111px"></colgroup>
<tr><td>Gross Profit:</td><td>1 613.04</td><td>Gross Loss:</td><td>696.05</td><td>Total Net Profit:</td><td>916.99</td></tr>
<tr><td>Profit Factor:</td><td>2.32</td><td>Expected Payoff:</td><td>22.37</td><td></td><td></td></tr>
<tr><td>Absolute Drawdown:</td><td>368.55</td><td>Maximal Drawdown:</td><td>373.08 (0.37%)</td><td>Relative Drawdown:</td><td>0.37% (373.08)</td></tr>
</table>
<table class="s" style="left:1033px;top:718px;width:825px">
<colgroup><col style="width:177px"><col style="width:77px"><col style="width:189px"><col style="width:114px"><col style="width:157px"><col style="width:111px"></colgroup>
<tr><td>Total Trades:</td><td>41</td><td>Short Positions (won %):</td><td>14 (57.14%)</td><td>Long Positions (won %):</td><td>27 (48.15%)</td></tr>
<tr><td></td><td></td><td>Profit Trades (% of total):</td><td>21 (51.22%)</td><td>Loss trades (% of total):</td><td>20 (48.78%)</td></tr>
<tr><td>Largest</td><td></td><td>profit trade:</td><td>336.00</td><td>loss trade:</td><td>-115.06</td></tr>
<tr><td>Average</td><td></td><td>profit trade:</td><td>76.81</td><td>loss trade:</td><td>-34.80</td></tr>
<tr><td>Maximum</td><td></td><td>consecutive wins ($):</td><td>7 (816.24)</td><td>consecutive losses ($):</td><td>11 (-334.60)</td></tr>
<tr><td>Maximal</td><td></td><td>consecutive profit (count):</td><td>816.24 (7)</td><td>consecutive loss (count):</td><td>-334.60 (11)</td></tr>
<tr><td>Average</td><td></td><td>consecutive wins:</td><td>3</td><td>consecutive losses:</td><td>3</td></tr>
</table>

<div class="a" style="left:1382px;top:880px;font-size:20px;line-height:24px;color:#d2d2d2">Активация Windows</div>
<div class="a" style="left:1382px;top:906px;font-size:13.900px;line-height:18px;color:#d6d6d6">Чтобы активировать Windows, перейдите в раздел "Параметры".</div>

<!-- scrollbar -->
<div class="a" style="left:1889px;top:24px;width:13px;height:924px;background:#f6f6f6"></div>
<div class="a" style="left:1893px;top:483px;width:9px;height:465px;background:#c8c8c8"></div>
<svg class="a" style="left:1893px;top:28px" width="9" height="8"><path d="M1 6l3.500-5 3.500 5z" fill="#444"/></svg>
</div></body></html>
